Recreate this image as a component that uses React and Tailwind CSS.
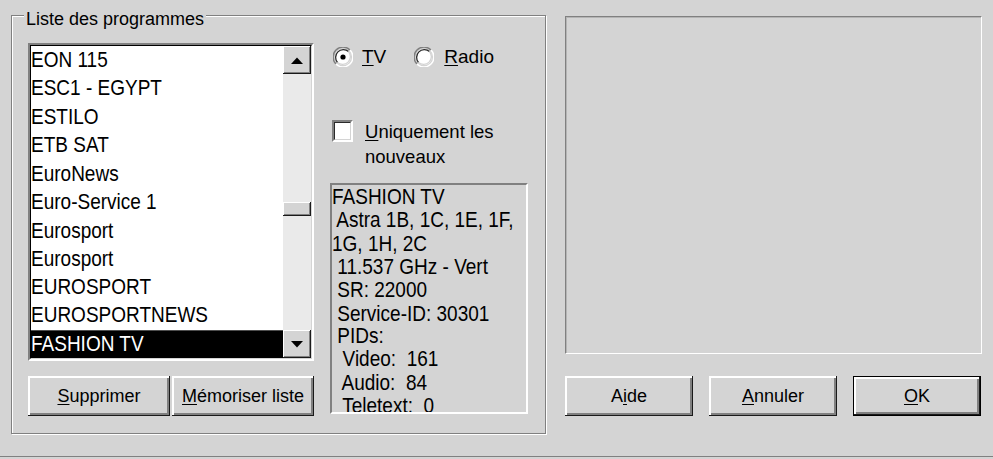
import React from "react";

function Btn({ children, className = "" }) {
  return (
    <div
      className={`flex items-center justify-center bg-[#d4d4d4] text-[18px] leading-[22px] text-black shadow-[inset_-1px_-1px_0_#1a1a1a,inset_2px_2px_0_#ffffff,inset_-3px_-3px_0_#808080] ${className}`}
    >
      <span>{children}</span>
    </div>
  );
}

function ScrollBtn({ down }) {
  return (
    <div className="h-[28px] w-full flex items-center justify-center bg-[#d4d4d4] shadow-[inset_-1px_-1px_0_#1a1a1a,inset_1px_1px_0_#ffffff,inset_-2px_-2px_0_#808080]">
      <svg width="12" height="7" viewBox="0 0 12 7">
        {down ? (
          <polygon points="0,0 12,0 6,6.5" fill="#000" />
        ) : (
          <polygon points="6,0.5 12,7 0,7" fill="#000" />
        )}
      </svg>
    </div>
  );
}

function Radio({ checked }) {
  return (
    <svg width="20" height="20" viewBox="0 0 20 20" className="shrink-0">
      <circle cx="10" cy="10" r="8" fill="#ffffff" />
      <path d="M3 17 A9.3 9.3 0 0 1 17 3" stroke="#808080" strokeWidth="1.5" fill="none" />
      <path d="M17 3 A9.3 9.3 0 0 1 3 17" stroke="#ffffff" strokeWidth="1.5" fill="none" />
      <path d="M4.5 15.5 A7.8 7.8 0 0 1 15.5 4.5" stroke="#2a2a2a" strokeWidth="1.3" fill="none" />
      <path d="M15.5 4.5 A7.8 7.8 0 0 1 4.5 15.5" stroke="#d4d4d4" strokeWidth="1.3" fill="none" />
      {checked && <circle cx="10" cy="10" r="2.6" fill="#000" />}
    </svg>
  );
}

export default function App() {
  const items = [
    "EON 115",
    "ESC1 - EGYPT",
    "ESTILO",
    "ETB SAT",
    "EuroNews",
    "Euro-Service 1",
    "Eurosport",
    "Eurosport",
    "EUROSPORT",
    "EUROSPORTNEWS",
    "FASHION TV",
  ];
  const info = [
    "FASHION TV",
    " Astra 1B, 1C, 1E, 1F,",
    "1G, 1H, 2C",
    " 11.537 GHz - Vert",
    " SR: 22000",
    " Service-ID: 30301",
    " PIDs:",
    "  Video:  161",
    "  Audio:  84",
    "  Teletext:  0",
  ];
  return (
    <div className="w-[993px] h-[459px] bg-[#d4d4d4] flex flex-col overflow-hidden font-['Liberation_Sans',Arial,sans-serif] text-black">
      <div className="flex items-start pl-[11px] pt-[15px]">
        {/* Group box */}
        <div className="relative w-[535px] h-[419px] border border-[#808080] shadow-[inset_1px_1px_0_#ffffff,1px_1px_0_#ffffff] flex items-start pl-[16px] pt-[27px]">
          <span className="absolute left-[12px] top-[-8px] px-[2px] bg-[#d4d4d4] text-[18px] leading-[22px] whitespace-nowrap">
            Liste des programmes
          </span>

          {/* Left column */}
          <div className="w-[286px] flex flex-col">
            <div className="w-[286px] h-[318px] border-2 border-t-[#808080] border-l-[#808080] border-r-white border-b-white">
              <div className="w-full h-full flex border border-t-black border-l-black border-r-[#d4d4d4] border-b-[#d4d4d4] bg-white">
                <div className="flex-1 overflow-hidden">
                  <div className="origin-top scale-y-[1.17]">
                    {items.map((it, i) => (
                      <div
                        key={i}
                        className={`h-[24.27px] leading-[24.27px] text-[19px] whitespace-nowrap ${
                          i === items.length - 1 ? "bg-black text-white" : ""
                        }`}
                      >
                        {it}
                      </div>
                    ))}
                  </div>
                </div>
                <div className="w-[28px] flex flex-col bg-[#eaeaea]">
                  <ScrollBtn />
                  <div className="h-[128px]" />
                  <div className="h-[14px] bg-[#d4d4d4] shadow-[inset_-1px_-1px_0_#1a1a1a,inset_1px_1px_0_#ffffff,inset_-2px_-2px_0_#808080]" />
                  <div className="flex-1" />
                  <ScrollBtn down />
                </div>
              </div>
            </div>
            <div className="mt-[15px] flex gap-[2px]">
              <Btn className="w-[142px] h-[40px]">
                <span className="underline underline-offset-2">S</span>upprimer
              </Btn>
              <Btn className="w-[142px] h-[40px]">
                <span className="underline underline-offset-2">M</span>émoriser liste
              </Btn>
            </div>
          </div>

          {/* Middle column */}
          <div className="ml-[16px] w-[198px] flex flex-col">
            <div className="mt-[4px] h-[20px] flex items-center pl-[3px]">
              <Radio checked />
              <span className="ml-[9px] text-[19px] leading-[20px]">
                <span className="underline underline-offset-2">T</span>V
              </span>
              <span className="ml-[28px]">
                <Radio />
              </span>
              <span className="ml-[10px] text-[19px] leading-[20px]">
                <span className="underline underline-offset-2">R</span>adio
              </span>
            </div>
            <div className="mt-[53px] flex items-start pl-[2px]">
              <div className="w-[21px] h-[22px] shrink-0 border-2 border-t-[#808080] border-l-[#808080] border-r-white border-b-white">
                <div className="w-full h-full bg-white border border-t-[#2a2a2a] border-l-[#2a2a2a] border-r-[#d4d4d4] border-b-[#d4d4d4]" />
              </div>
              <div className="ml-[12px] -mt-[1px] text-[18.5px] leading-[25px] whitespace-nowrap">
                <span className="underline underline-offset-2">U</span>niquement les
                <br />
                nouveaux
              </div>
            </div>
            <div className="mt-[14px] w-[198px] h-[231px] border-2 border-t-[#808080] border-l-[#808080] border-r-white border-b-white overflow-hidden">
              <div className="origin-top scale-y-[1.17] text-[19px] leading-[19.9px] whitespace-pre">
                {info.map((l, i) => (
                  <div key={i}>{l}</div>
                ))}
              </div>
            </div>
          </div>
        </div>

        {/* Right side */}
        <div className="ml-[19px] mt-[1px] flex flex-col">
          <div className="w-[417px] h-[338px] border border-t-[#808080] border-l-[#808080] border-r-white border-b-white shadow-[inset_1px_1px_0_#b4b4b4]" />
          <div className="mt-[22px] flex gap-[16px]">
            <Btn className="w-[128px] h-[40px]">
              A<span className="underline underline-offset-2">i</span>de
            </Btn>
            <Btn className="w-[128px] h-[40px]">
              <span className="underline underline-offset-2">A</span>nnuler
            </Btn>
            <div className="w-[128px] h-[40px] border border-black">
              <Btn className="w-full h-full">
                <span className="underline underline-offset-2">O</span>K
              </Btn>
            </div>
          </div>
        </div>
      </div>
      <div className="mt-auto h-[3px] border-t border-[#808080]" />
    </div>
  );
}
